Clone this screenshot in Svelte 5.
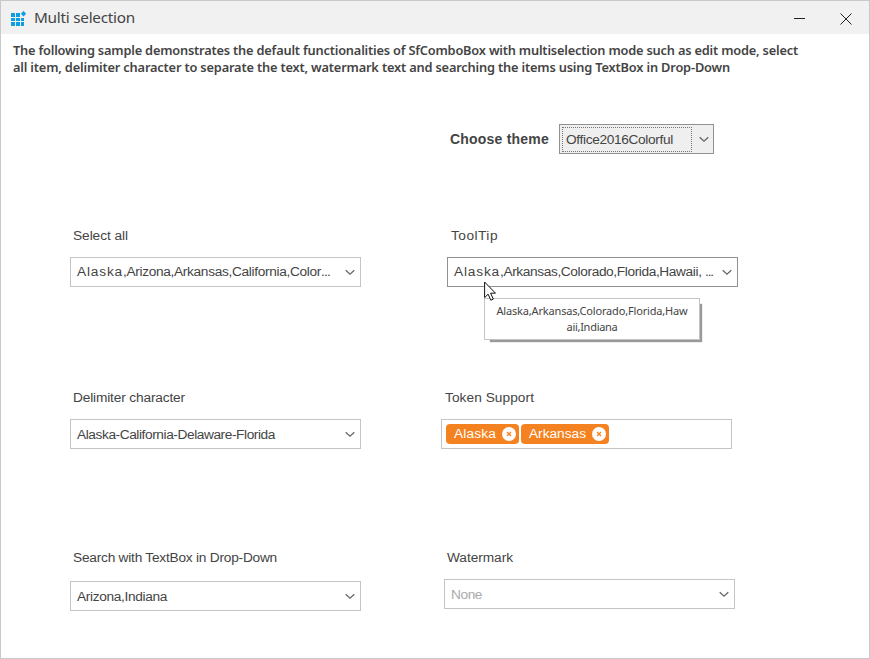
<script>
  const left = [
    {
      label: 'Select all', labelWidth: 55, gap: 12, raised: true,
      parts: [
        { text: 'Alaska', width: 46 },
        { text: ',Arizona,Arkansas,California,Color', width: 198 },
        { text: '...', width: 9 }
      ]
    },
    {
      label: 'Delimiter character', labelWidth: 112, gap: 12,
      parts: [{ text: 'Alaska-California-Delaware-Florida', width: 198 }]
    },
    {
      label: 'Search with TextBox in Drop-Down', labelWidth: 204, gap: 14,
      parts: [{ text: 'Arizona,Indiana', width: 90 }]
    }
  ];

  const tooltipParts = [
    { text: 'Alaska', width: 46 },
    { text: ',Arkansas,Colorado,Florida,Hawaii, ', width: 205 },
    { text: '...', width: 8 }
  ];
  const tooltipLines = [
    { text: 'Alaska,Arkansas,Colorado,Florida,Haw', width: 191 },
    { text: 'aii,Indiana', width: 51 }
  ];
  const tokens = [
    { text: 'Alaska', width: 42, size: 73 },
    { text: 'Arkansas', width: 57, size: 88 }
  ];
  const intro = [
    { text: 'The following sample demonstrates the default functionalities of SfComboBox with multiselection mode such as edit mode, select', width: 785 },
    { text: 'all item, delimiter character to separate the text, watermark text and searching the items using TextBox in Drop-Down', width: 717 }
  ];

  // Spreads the letters of a run so that it fills the given width.
  function fit(node, width) {
    const natural = node.getBoundingClientRect().width;
    const count = node.textContent.length;
    node.style.letterSpacing = `${(width - natural) / count}px`;
  }
</script>

{#snippet chevron()}
  <svg class="chevron" width="10" height="7" viewBox="0 0 10 7">
    <path d="M0.7 1.2 L5 5.2 L9.3 1.2" fill="none" stroke="currentColor" stroke-width="1.3" />
  </svg>
{/snippet}

{#snippet combo(parts)}
  <div class="value">
    {#each parts as part}<span class="run" use:fit={part.width}>{part.text}</span>{/each}
  </div>
  {@render chevron()}
{/snippet}

<div class="window">
  <header>
    <svg class="logo" width="17" height="16" viewBox="0 0 17 16" fill="#0d9fe4">
      <path d="M0 2h4v4h-4zM5 2h4v4h-4zM0 7h4v3h-4zM5 7h4v3h-4zM10 7h3v3h-3zM0 11h4v4h-4zM5 11h4v4h-4zM10 11h3v4h-3z" />
      <path d="M12.5 0L15.2 2.7L12.5 5.4L9.8 2.7z" />
    </svg>
    <h1><span class="run" use:fit={101}>Multi selection</span></h1>
    <svg class="minimize" width="11" height="12" viewBox="0 0 11 12"><path d="M0 6.5h11" stroke="#222" /></svg>
    <svg class="close" width="12" height="12" viewBox="0 0 12 12"><path d="M0.5 0.5l11 11M11.5 0.5l-11 11" stroke="#222" fill="none" /></svg>
  </header>

  <div class="intro">
    {#each intro as line}<div><span class="run" use:fit={line.width}>{line.text}</span></div>{/each}
  </div>

  <div class="theme">
    <b><span class="run" use:fit={99}>Choose theme</span></b>
    <div class="select">
      <div class="focus"><span class="run" use:fit={107}>Office2016Colorful</span></div>
      {@render chevron()}
    </div>
  </div>

  <main>
    <section>
      {#each left as field}
        <div class="field">
          <div class="label"><span class="run" use:fit={field.labelWidth}>{field.label}</span></div>
          <div class="box" class:raised={field.raised} style:margin-top="{field.gap}px">{@render combo(field.parts)}</div>
        </div>
      {/each}
    </section>

    <section>
      <div class="field tip-field">
        <div class="label"><span class="run" use:fit={47}>ToolTip</span></div>
        <div class="box active raised">{@render combo(tooltipParts)}</div>
        <div class="tooltip">
          {#each tooltipLines as line}<div><span class="run" use:fit={line.width}>{line.text}</span></div>{/each}
        </div>
        <svg class="cursor" width="13" height="21" viewBox="0 0 13 21">
          <path d="M0.6 1v15.6l3.5-3.4 2.7 6 2.5-1.1-2.7-5.9h4.9z" fill="#fff" stroke="#111" />
        </svg>
      </div>

      <div class="field token-field">
        <div class="label"><span class="run" use:fit={89}>Token Support</span></div>
        <div class="box tokens">
          {#each tokens as token}
            <div class="token" style:width="{token.size}px">
              <span class="run" use:fit={token.width}>{token.text}</span>
              <svg width="14" height="14" viewBox="0 0 14 14">
                <circle cx="7" cy="7" r="7" fill="#fff" />
                <path d="M5 5l4 4M9 5l-4 4" stroke="#f58220" stroke-width="1.3" />
              </svg>
            </div>
          {/each}
        </div>
      </div>

      <div class="field mark-field">
        <div class="label"><span class="run" use:fit={66}>Watermark</span></div>
        <div class="box empty">{@render combo([{ text: 'None', width: 31 }])}</div>
      </div>
    </section>
  </main>
</div>

<style>
  .window {
    box-sizing: border-box;
    width: 870px;
    height: 659px;
    border: 1px solid #c9c9c9;
    background: #fff;
    color: #444;
    font: 13.7px/20px "Liberation Sans", Arial, sans-serif;
    overflow: hidden;
  }
  .run { display: inline-block; white-space: pre; }
  header {
    display: flex;
    align-items: center;
    height: 33px;
    padding: 0 17px 0 10px;
    background: #f1f1f1;
  }
  .logo { margin-top: 2px; }
  h1 {
    flex: 1;
    margin: 0 0 1px 6px;
    font: 400 15.3px/20px "Noto Sans", "Open Sans", sans-serif;
  }
  .minimize { margin: 1px 35px 0 0; }
  .close { margin-top: 2px; }
  .intro {
    padding: 8px 12px 0;
    font: 600 12.8px/17px "Noto Sans", "Open Sans", sans-serif;
  }
  .theme {
    display: flex;
    align-items: center;
    margin: 48px 0 0 449px;
  }
  .theme b { width: 109px; font-size: 14px; }
  .select {
    box-sizing: border-box;
    display: flex;
    align-items: center;
    width: 155px;
    height: 30px;
    padding: 0 4px 0 2px;
    border: 1px solid #919191;
    background: #efefef;
  }
  .focus {
    box-sizing: border-box;
    width: 130px;
    height: 25px;
    padding-left: 3px;
    border: 1px dotted #777;
    line-height: 23px;
  }
  .chevron { flex: none; margin-left: auto; color: #666; }
  main {
    display: grid;
    grid-template-columns: 377px 1fr;
    padding: 71px 0 0 69px;
  }
  .field { position: relative; width: 291px; height: 162px; }
  .field:nth-child(2) { height: 160px; }
  .label { padding-left: 3px; height: 20px; line-height: 22px; }
  .box {
    box-sizing: border-box;
    display: flex;
    align-items: center;
    width: 291px;
    height: 30px;
    margin-top: 12px;
    padding: 0 5px 0 6px;
    border: 1px solid #c4c4c4;
    background: #fff;
  }
  .value { padding-top: 2px; white-space: nowrap; }
  .raised .value { padding-top: 0; }
  .active { border-color: #919191; }
  .tip-field .label, .token-field .label { padding-left: 4px; }
  .token-field { margin-left: -6px; }
  .mark-field { margin-left: -3px; }
  .empty .value { color: #aaa; }
  .tokens { gap: 2px; padding: 0 4px; }
  .token {
    box-sizing: border-box;
    display: flex;
    align-items: center;
    justify-content: space-between;
    height: 20px;
    padding: 0 3px 0 8px;
    border-radius: 4px;
    background: #f58220;
    color: #fff;
  }
  .tooltip {
    position: absolute;
    left: 37px;
    top: 73px;
    box-sizing: border-box;
    width: 216px;
    height: 42px;
    padding-top: 4px;
    border: 1px solid #c4c4c4;
    background: #fff;
    box-shadow: 4px 4px 1px -2px #999;
    text-align: center;
    font: 11px/16px "Noto Sans", "Open Sans", sans-serif;
  }
  .cursor { position: absolute; left: 37px; top: 56px; }
</style>
